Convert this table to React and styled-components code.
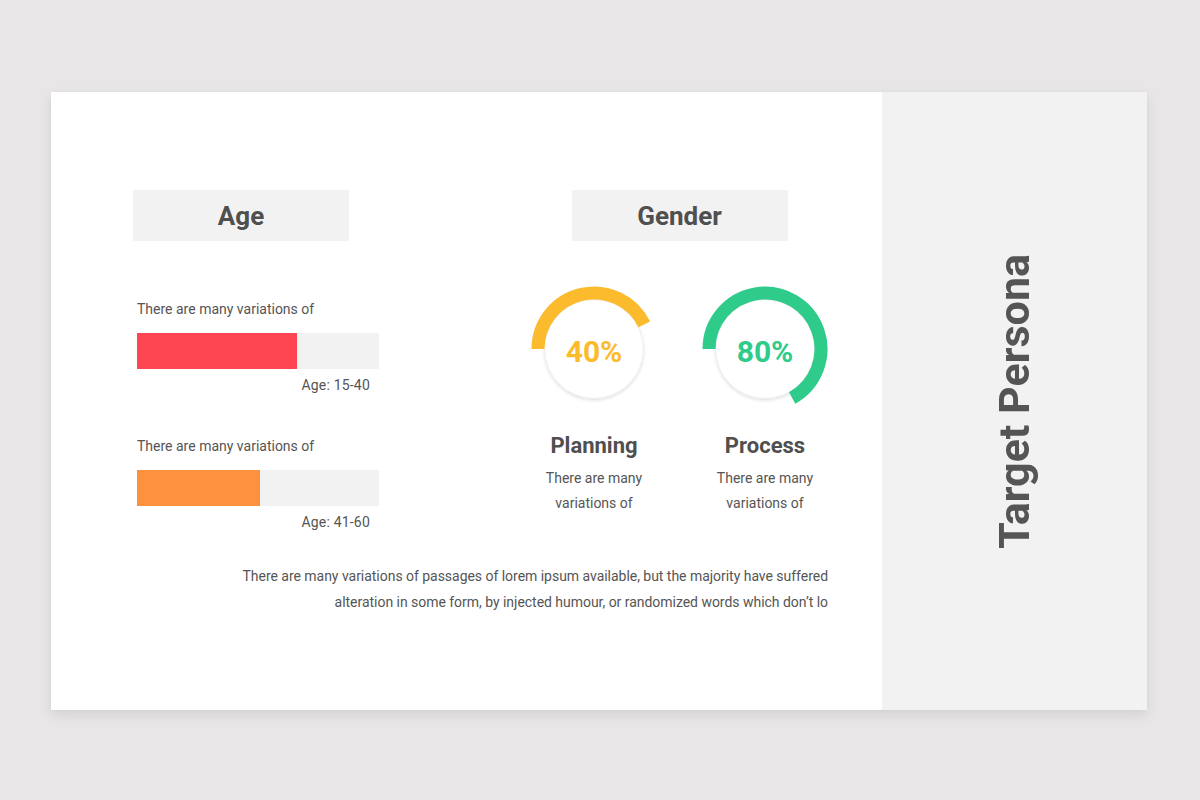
import React from "react";
import styled, { createGlobalStyle } from "styled-components";

const Global = createGlobalStyle`
  html, body { margin: 0; padding: 0; }
  body {
    background: #e8e6e7;
    font-family: Roboto, "Liberation Sans", Arial, sans-serif;
    color: #555555;
  }
`;

const Page = styled.div`
  box-sizing: border-box;
  width: 1200px;
  height: 800px;
  padding: 92px 0 0 51px;
`;

const Slide = styled.div`
  display: flex;
  width: 1096px;
  height: 618px;
  box-shadow: 0 5px 12px rgba(0, 0, 0, 0.09), 0 0 4px rgba(0, 0, 0, 0.03);
`;

const Main = styled.div`
  box-sizing: border-box;
  width: 831px;
  background: #ffffff;
  padding: 98px 54px 0 82px;
  display: flex;
  flex-direction: column;
`;

const Side = styled.div`
  flex: 1;
  background: #f2f2f2;
  display: flex;
  align-items: center;
  justify-content: center;
`;

const VerticalTitle = styled.div`
  writing-mode: vertical-rl;
  transform: rotate(180deg);
  font-size: 43px;
  font-weight: 700;
  color: #555555;
  line-height: 1;
  padding-left: 1px;
`;

const Row = styled.div`
  display: flex;
  align-items: flex-start;
`;

const AgeCol = styled.div`
  width: 246px;
  display: flex;
  flex-direction: column;
`;

const GenderCol = styled.div`
  width: 320px;
  margin-left: 141px;
  display: flex;
  flex-direction: column;
  align-items: center;
`;

const Header = styled.div`
  width: 216px;
  height: 51px;
  background: #f2f2f2;
  display: flex;
  align-items: center;
  justify-content: center;
  font-size: 26px;
  font-weight: 700;
  color: #4f4f4f;
`;

const BarList = styled.div`
  display: flex;
  flex-direction: column;
  gap: 41px;
  padding: 58px 0 0 4px;
`;

const BarItem = styled.div`
  display: flex;
  flex-direction: column;
`;

const Label = styled.div`
  font-size: 14px;
  line-height: 20px;
  color: #555555;
`;

const Track = styled.div`
  margin-top: 14px;
  width: 242px;
  height: 36px;
  background: #f2f2f2;
  display: flex;
`;

const Fill = styled.div`
  height: 100%;
  background: ${(p) => p.$color};
`;

const Caption = styled.div`
  align-self: flex-end;
  margin: 6px 9px 0 0;
  font-size: 14px;
  line-height: 20px;
  letter-spacing: 0.2px;
  color: #555555;
`;

const Charts = styled.div`
  display: flex;
  gap: 23px;
  margin-top: 43px;
`;

const ChartItem = styled.div`
  width: 148px;
  display: flex;
  flex-direction: column;
  align-items: center;
`;

const Donut = styled.div`
  position: relative;
  width: 130px;
  height: 130px;
`;

const Percent = styled.div`
  position: absolute;
  inset: 0;
  display: flex;
  align-items: center;
  justify-content: center;
  padding-top: 4px;
  box-sizing: border-box;
  font-size: 30px;
  font-weight: 700;
  color: ${(p) => p.$color};
`;

const ChartTitle = styled.div`
  margin-top: 19px;
  font-size: 22px;
  line-height: 26px;
  font-weight: 700;
  color: #4f4f4f;
`;

const ChartDesc = styled.div`
  margin-top: 7px;
  width: 120px;
  text-align: center;
  font-size: 14px;
  line-height: 25px;
  color: #555555;
`;

const Paragraph = styled.div`
  margin-top: 32px;
  text-align: right;
  font-size: 14px;
  line-height: 25.5px;
  letter-spacing: -0.03px;
  color: #555555;
  white-space: nowrap;
`;

const Line = styled.span`
  display: block;
`;

const bars = [
  { label: "There are many variations of", caption: "Age: 15-40", pct: 66, color: "#fe4652" },
  { label: "There are many variations of", caption: "Age: 41-60", pct: 51, color: "#fd913f" },
];

const charts = [
  { value: "40%", sweep: 154, color: "#fbbb2d", title: "Planning", id: "a" },
  { value: "80%", sweep: 241, color: "#2ecb8b", title: "Process", id: "b" },
];

function arcPath(cx, cy, r, sweep) {
  const a0 = Math.PI;
  const a1 = Math.PI + (sweep * Math.PI) / 180;
  const x0 = cx + r * Math.cos(a0);
  const y0 = cy + r * Math.sin(a0);
  const x1 = cx + r * Math.cos(a1);
  const y1 = cy + r * Math.sin(a1);
  const large = sweep > 180 ? 1 : 0;
  return `M ${x0} ${y0} A ${r} ${r} 0 ${large} 1 ${x1} ${y1}`;
}

function Ring({ sweep, color, id }) {
  return (
    <svg width="130" height="130" viewBox="0 0 130 130">
      <defs>
        <filter id={`sh-${id}`} x="-20%" y="-20%" width="140%" height="140%">
          <feDropShadow dx="0" dy="1.5" stdDeviation="1.5" floodColor="#000" floodOpacity="0.12" />
        </filter>
      </defs>
      <circle cx="65" cy="65" r="49.5" fill="#fff" stroke="#ececec" strokeWidth="1" filter={`url(#sh-${id})`} />
      <path d={arcPath(65, 65, 56, sweep)} fill="none" stroke={color} strokeWidth="13" strokeLinecap="butt" />
    </svg>
  );
}

export default function App() {
  return (
    <>
      <Global />
      <Page>
        <Slide>
          <Main>
            <Row>
              <AgeCol>
                <Header>Age</Header>
                <BarList>
                  {bars.map((b, i) => (
                    <BarItem key={i}>
                      <Label>{b.label}</Label>
                      <Track>
                        <Fill $color={b.color} style={{ width: `${b.pct}%` }} />
                      </Track>
                      <Caption>{b.caption}</Caption>
                    </BarItem>
                  ))}
                </BarList>
              </AgeCol>
              <GenderCol>
                <Header>Gender</Header>
                <Charts>
                  {charts.map((c) => (
                    <ChartItem key={c.id}>
                      <Donut>
                        <Ring sweep={c.sweep} color={c.color} id={c.id} />
                        <Percent $color={c.color}>{c.value}</Percent>
                      </Donut>
                      <ChartTitle>{c.title}</ChartTitle>
                      <ChartDesc>There are many variations of</ChartDesc>
                    </ChartItem>
                  ))}
                </Charts>
              </GenderCol>
            </Row>
            <Paragraph>
              <Line>There are many variations of passages of lorem ipsum available, but the majority have suffered</Line>
              <Line>alteration in some form, by injected humour, or randomized words which don’t lo</Line>
            </Paragraph>
          </Main>
          <Side>
            <VerticalTitle>Target Persona</VerticalTitle>
          </Side>
        </Slide>
      </Page>
    </>
  );
}
